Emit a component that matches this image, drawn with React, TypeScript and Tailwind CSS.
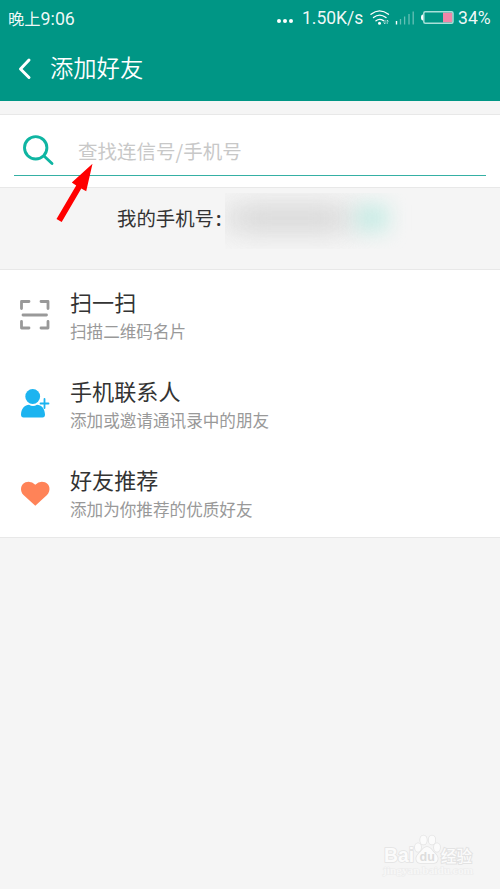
import type { ReactNode } from "react";

function StatusBar() {
  return (
    <div className="flex h-9 items-center text-white/95">
      <div className="ml-[8px] flex w-[268px] items-center text-[16.3px] leading-9">
        <span className="whitespace-nowrap">晚上</span>
        <span className="mt-px font-[Roboto] text-[17.8px]">9:06</span>
      </div>
      <div className="mt-1.5 flex w-[26px] gap-[2px] pl-px">
        <i className="size-[4px] rounded-full bg-white" />
        <i className="size-[4px] rounded-full bg-white" />
        <i className="size-[4px] rounded-full bg-white" />
      </div>
      <span className="w-[68px] whitespace-nowrap font-[Roboto] text-[17.5px]">1.50K/s</span>
      <svg className="h-9 w-[88px] shrink-0" viewBox="370 0 88 36" fill="none">
        <g stroke="white" strokeWidth="1.400" strokeLinecap="round">
          <path d="M371 14.2Q379.500 7.500 388.500 14.200" />
          <path d="M373.500 17.500Q379.500 12.800 386 17.500" />
          <path d="M376 20.700Q379.500 18 383.500 20.700" />
        </g>
        <circle cx="379.500" cy="23.300" r="1.500" fill="white" />
        <path d="M385 20v4m-1.500-1.500L385 24m2.200 0v-4m1.300 1.500L387.200 20" stroke="white" strokeOpacity=".6" />
        <path d="M396.500 21v3.500" stroke="white" strokeWidth="1.400" />
        <path d="M400.500 19v5.500M404.600 16.500v8M409 14v10.500M413.200 11.500v13" stroke="white" strokeOpacity=".4" strokeWidth="1.300" />
        <rect x="443" y="12.500" width="9.500" height="10" fill="#f386a8" />
        <rect x="423.800" y="11.800" width="29.200" height="11.400" rx="1.500" stroke="#a9e0d9" strokeWidth="1.500" />
        <path d="M423 14.500q-2 0-2 3t2 3z" fill="white" />
      </svg>
      <span className="font-[Roboto] text-[17.6px]">34%</span>
    </div>
  );
}

function Row({ icon, title, detail }: { icon: ReactNode; title: string; detail: string }) {
  return (
    <li className="flex h-[89px] items-center">
      <div className="ml-[19px] w-[51px] shrink-0">{icon}</div>
      <div>
        <div className="text-[22.1px] leading-[30px] text-[#333]">{title}</div>
        <div className="mt-[2px] text-[16.6px] leading-[26px] text-[#999]">{detail}</div>
      </div>
    </li>
  );
}

const scanIcon = (
  <svg className="size-8" viewBox="0 0 32 32" fill="none" stroke="#999" strokeWidth="3" strokeLinecap="round" strokeLinejoin="round">
    <path d="M10 2.500H2.500V9.500M22 2.500h7V9.500M2.500 22.500v6.500h7.500M29 22.500v6.500h-7M4 16h23.500" strokeWidth="2.800" />
  </svg>
);

const contactIcon = (
  <svg className="size-8" viewBox="0 0 32 32" fill="#1cb4f0">
    <circle cx="13.700" cy="8.500" r="7.400" />
    <path d="M2 26.500C2.300 20 6 17 10 16.700Q14 19.200 18 16.700C22.500 17 25.600 20 26 26.500Q26 29.500 23.500 29.500H4.500Q2 29.500 2 26.500Z" />
    <path d="M21.500 15.500h8M25.500 11v9" stroke="#1cb4f0" strokeWidth="1.800" strokeLinecap="round" />
  </svg>
);

const heartIcon = (
  <svg className="size-8" viewBox="0 0 32 32" fill="#ff8358">
    <path d="M16.300 28.700L4.500 18C.5 14 1.500 7 6.500 5.200Q12 3.300 16.300 7.800Q20.500 3.300 26 5.200C31.200 7 32 14 28 18Z" />
  </svg>
);

export default function App() {
  return (
    <div className="relative h-[889px] w-[500px] overflow-hidden bg-[#f5f5f5] font-['Noto_Sans_CJK_SC',sans-serif]">
      <header className="h-[101px] bg-[#009685]">
        <StatusBar />
        <div className="flex h-[65px] items-center">
          <svg className="ml-[17px] h-6 w-[33px]" viewBox="0 0 33 24" fill="none" stroke="white" strokeWidth="3" strokeLinecap="round" strokeLinejoin="round">
            <path d="M12 3L3.500 12L12 20.500" />
          </svg>
          <h1 className="-mt-[3px] text-[23.3px] font-[350] leading-9 text-white">添加好友</h1>
        </div>
      </header>

      <section className="mt-[13px] h-[74px] border-y border-[#e8e8e8] bg-white px-[14px]">
        <div className="relative flex h-[61px] items-center border-b border-[#35b0a4]">
          <svg className="mt-3 ml-[7px] size-9" viewBox="0 0 36 36" fill="none" stroke="#0fb5a2" strokeWidth="2.900" strokeLinecap="round">
            <circle cx="14.700" cy="14.800" r="11.200" />
            <path d="M23 23L31 30.500" />
          </svg>
          <span className="mt-[12px] ml-[21px] text-[19.500px] leading-8 text-[#c8c8c8]">查找连信号/手机号</span>
          <svg className="absolute top-[48px] left-[40px] h-[60px] w-[42px]" viewBox="54 163 42 60" fill="red">
            <path d="M92.500 163.700L86.200 191.300L81.300 188.500L61.700 222L56.500 219L76.200 185.500L71.800 182.500Z" />
          </svg>
        </div>
      </section>

      <section className="flex h-[82px] pt-[5px]">
        <span className="ml-[117px] mt-[9px] w-[108px] shrink-0 whitespace-nowrap text-[19.400px] leading-8 text-[#333]">
          我的手机号<span className="ml-[2px] font-['Noto_Sans'] font-semibold">:</span>
        </span>
        <div className="relative h-[56px] w-[190px] overflow-hidden">
          <div className="absolute top-[12px] -left-[2px] h-[27px] w-[134px] bg-[#c8c8c8]/45 blur-[12px]" />
          <div className="absolute top-[13px] left-[20px] h-[24px] w-[90px] bg-[#c8c8c8]/30 blur-[12px]" />
          <div className="absolute top-[12px] left-[131px] h-[26px] w-[32px] bg-[#b4e8de]/70 blur-[10px]" />
        </div>
      </section>

      <ul className="-mt-px h-[269px] border-y border-[#e8e8e8] bg-white">
        <Row icon={scanIcon} title="扫一扫" detail="扫描二维码名片" />
        <Row icon={contactIcon} title="手机联系人" detail="添加或邀请通讯录中的朋友" />
        <Row icon={heartIcon} title="好友推荐" detail="添加为你推荐的优质好友" />
      </ul>

      <svg className="absolute top-[830px] left-[380px] h-[52px] w-[100px]" viewBox="380 830 100 52" fill="#fbfbfb" stroke="#e3e3e3" strokeWidth="1.600" paintOrder="stroke">
        <text x="384" y="862" fontFamily="Liberation Sans" fontWeight="700" fontSize="20" textLength="30" lengthAdjust="spacingAndGlyphs">Bai</text>
        <ellipse cx="418" cy="847.500" rx="3" ry="4.200" />
        <ellipse cx="423.500" cy="840" rx="3.300" ry="4.500" />
        <ellipse cx="432" cy="840" rx="3.300" ry="4.500" />
        <ellipse cx="437" cy="847.500" rx="3" ry="4.200" />
        <path d="M427 847c4 0 5 4 8.500 7c4 4 2 9-2 9h-13c-4 0-6-5-2-9c3.500-3 4.500-7 8.500-7Z" />
        <text x="419.500" y="861" fontFamily="Liberation Sans" fontWeight="700" fontSize="12.500" fill="#dddddd" stroke="none">du</text>
        <text x="441" y="862" fontFamily="Noto Sans CJK SC" fontWeight="500" fontSize="15.500" strokeWidth="2">经验</text>
        <text x="383" y="874" fontFamily="Liberation Serif" fontWeight="700" fontSize="10" strokeWidth="1" stroke="#ebebeb" fill="#f7f7f7" textLength="90" lengthAdjust="spacingAndGlyphs">jingyan.baidu.com</text>
      </svg>
    </div>
  );
}
